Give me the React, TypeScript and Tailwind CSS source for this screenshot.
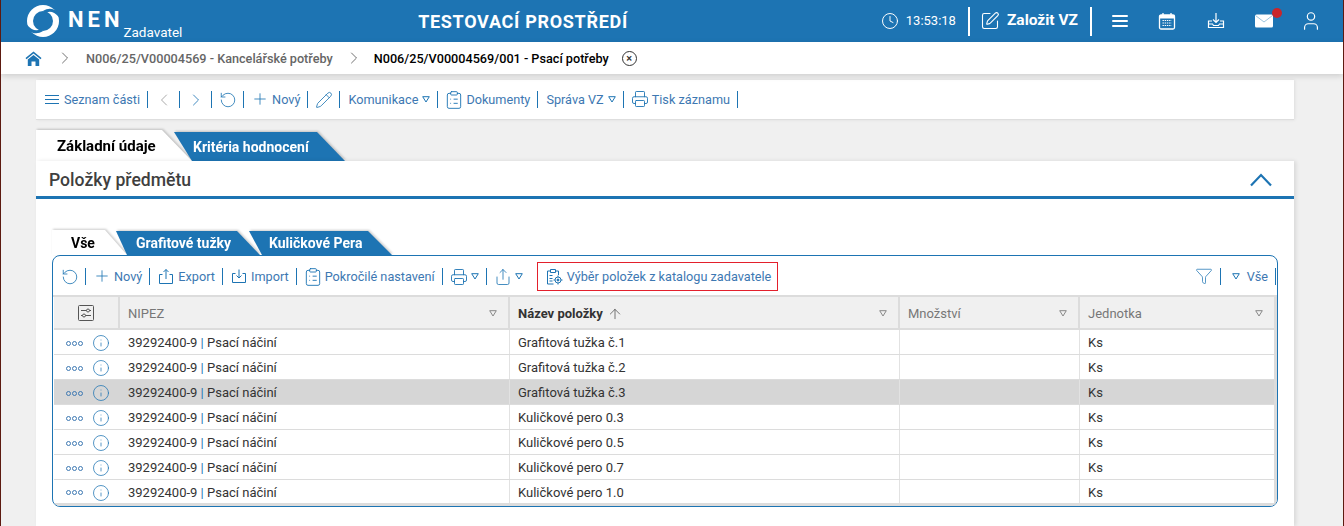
import { Clock, SquarePen, User, ChevronRight, ChevronLeft, RotateCcw, Plus, Pencil, ClipboardList, Printer, Share, Funnel, Info, ArrowUp } from "lucide-react";
import type { ReactNode } from "react";

const rows = [
  "Grafitová tužka č.1",
  "Grafitová tužka č.2",
  "Grafitová tužka č.3",
  "Kuličkové pero 0.3",
  "Kuličkové pero 0.5",
  "Kuličkové pero 0.7",
  "Kuličkové pero 1.0",
];

function Sep() {
  return <span className="w-px h-[17px] shrink-0 bg-[#1d74b3]" />;
}

function Tri({ className = "text-[#1d74b3]" }: { className?: string }) {
  return (
    <svg width="8" height="7" viewBox="0 0 8 7" fill="none" stroke="currentColor" className={`shrink-0 ${className}`}>
      <path d="M0.7 0.7h6.6L4 6z" />
    </svg>
  );
}

function Item({ children }: { children: ReactNode }) {
  return <span className="flex items-center gap-[4px] pl-2 pr-[7px] text-[12.7px] text-[#3d78b2] whitespace-nowrap">{children}</span>;
}

function Logo() {
  return (
    <svg width="32" height="32" viewBox="0 0 32 32" className="shrink-0">
      <circle cx="16" cy="16" r="16" fill="#fff" />
      <circle cx="16" cy="16" r="10" fill="#1d74b3" />
      <path d="M17 7Q25 2 33 11" fill="none" stroke="#1d74b3" strokeWidth="3" />
      <path d="M15 25Q7 30 -1 21" fill="none" stroke="#1d74b3" strokeWidth="3" />
    </svg>
  );
}

function BurgerIcon() {
  return (
    <svg width="16" height="14" viewBox="0 0 16 14" fill="#fff" className="shrink-0">
      <rect y="1" width="16" height="2" rx="1" />
      <rect y="6" width="16" height="2" rx="1" />
      <rect y="11" width="16" height="2" rx="1" />
    </svg>
  );
}

function CalendarIcon() {
  return (
    <svg width="18" height="18" viewBox="0 0 18 18" className="shrink-0">
      <rect x="1.5" y="3" width="15" height="14" rx="1.5" fill="none" stroke="#fff" strokeWidth="1.3" />
      <rect x="1.5" y="3" width="15" height="3.5" fill="#fff" />
      <path d="M5 1v3M13 1v3" stroke="#fff" strokeWidth="1.3" />
      <path d="M4.5 8.5h9M4.5 11h9M4.5 13.5h9" stroke="#fff" strokeWidth="1.2" strokeDasharray="1.4 0.8" />
    </svg>
  );
}

function TrayIcon() {
  return (
    <svg width="18" height="18" viewBox="0 0 18 18" fill="none" stroke="#fff" strokeWidth="1.2" className="shrink-0">
      <path d="M9 1v9M6 7.5 9 10.5l3-3" />
      <path d="M5 9H1.5v6.5h15V9H13M1.5 12h4l1 1.5h5l1-1.5h4" />
    </svg>
  );
}

function MailIcon() {
  return (
    <svg width="18" height="14" viewBox="0 0 18 14" className="shrink-0">
      <rect width="18" height="13" y="0.5" rx="1.5" fill="#fff" />
      <path d="M0.5 1.5 9 8l8.5-6.5" fill="none" stroke="#9cc3de" />
    </svg>
  );
}

function ImportIcon() {
  return (
    <svg width="16" height="16" viewBox="0 0 16 16" fill="none" stroke="#1d74b3" className="shrink-0">
      <path d="M4.5 5.5H1.5v9h13v-9h-3M8 1.5v8M5.5 7.5 8 10l2.5-2.5" />
    </svg>
  );
}

function ExportIcon() {
  return (
    <svg width="16" height="17" viewBox="0 0 16 17" fill="none" stroke="#1d74b3" className="shrink-0">
      <path d="M4.5 6.5H1.5v9h13v-9h-3M8 11V1.5M5.5 4 8 1.5 10.5 4" />
    </svg>
  );
}

function CatalogIcon() {
  return (
    <svg width="17" height="17" viewBox="0 0 17 17" fill="none" stroke="#1d74b3" className="shrink-0">
      <path d="M4.5 3H1.5v13h6M9.5 3h3v4" />
      <path d="M4.5 1.5h5V4.5h-5zM3.5 7.5h3M3.5 10.5h3M3.5 13h3" />
      <circle cx="12" cy="12" r="3" />
      <circle cx="12" cy="12" r="1" fill="#1d74b3" />
      <path d="M12 7.5V9M12 15v1.5M7.5 12H9M15 12h1.5" />
    </svg>
  );
}

function SettingsBox() {
  return (
    <svg width="16" height="16" viewBox="0 0 16 16" fill="none" stroke="#555" className="shrink-0">
      <rect x="0.5" y="0.5" width="15" height="15" rx="1" />
      <path d="M3 5.5h10M3 10.5h10" />
      <circle cx="10" cy="5.5" r="1.5" fill="#f0f0f0" />
      <circle cx="6" cy="10.5" r="1.5" fill="#f0f0f0" />
    </svg>
  );
}

function HeadCell({ label, width, bold, sort }: { label: string; width: string; bold?: boolean; sort?: boolean }) {
  return (
    <div className={`${width} flex items-center border-r-2 border-[#dcdcdc] pl-2 pr-[11px] pt-[2px] last:border-r-0`}>
      <span className={bold ? "font-bold text-[#333]" : "text-[#777]"}>{label}</span>
      {sort && <ArrowUp size={16} strokeWidth={1.2} className="ml-[4px] text-[#555]" />}
      <Tri className="ml-auto text-[#888]" />
    </div>
  );
}

export default function App() {
  return (
    <div className="h-[526px] w-[1344px] overflow-hidden bg-[#f0f0f0] border-x border-[#5c1a10] font-['Roboto',sans-serif] flex flex-col">
      {/* Top bar */}
      <header className="h-[42px] shrink-0 bg-[#1d74b3] text-white flex items-center">
        <div className="w-[380px] flex items-center pl-[26px]">
          <Logo />
          <span className="ml-[9px] text-[22px] leading-none font-bold tracking-[4px] mb-[3px]">NEN</span>
          <span className="text-[13.5px] leading-none mt-[24px]">Zadavatel</span>
        </div>
        <div className="w-[284px] text-center text-[18px] font-bold tracking-[0.7px]">TESTOVACÍ PROSTŘEDÍ</div>
        <div className="ml-auto flex items-center h-full pr-[21px]">
          <Clock size={18} strokeWidth={1.3} />
          <span className="ml-[7px] text-[13px]">13:53:18</span>
          <span className="w-[2px] h-[29px] bg-white ml-[12px]" />
          <SquarePen size={20} strokeWidth={1.3} className="ml-[10px]" />
          <span className="ml-[7px] text-[15.5px] font-bold">Založit VZ</span>
          <span className="w-[2px] h-[29px] bg-white ml-[12px]" />
          <span className="ml-[20px]"><BurgerIcon /></span>
          <span className="ml-[30px]"><CalendarIcon /></span>
          <span className="ml-[31px]"><TrayIcon /></span>
          <span className="relative ml-[30px]">
            <MailIcon />
            <span className="absolute -top-[6px] left-[17px] w-[10px] h-[10px] rounded-full bg-[#c9262b]" />
          </span>
          <User size={22} strokeWidth={1.3} className="ml-[27px]" />
        </div>
      </header>

      {/* Breadcrumb */}
      <nav className="h-[32px] shrink-0 bg-white shadow-[0_2px_6px_rgba(0,0,0,0.15)] flex items-center text-[12.67px] font-medium relative">
        <svg width="17" height="17" viewBox="0 0 17 17" className="ml-[24px]" fill="#1d74b3">
          <path d="M8.5 1.5 0.5 8l1 1.2 7-5.6 7 5.6 1-1.2z" />
          <path d="M2.8 9.6 8.5 5l5.7 4.6V16h-3.7v-4.5h-4V16H2.8z" />
        </svg>
        <ChevronRight size={20} strokeWidth={1} className="ml-[13px] text-[#555]" />
        <span className="ml-[11px] text-[#666]">N006/25/V00004569 - Kancelářské potřeby</span>
        <ChevronRight size={20} strokeWidth={1} className="ml-[11px] text-[#555]" />
        <span className="ml-[10px] text-black">N006/25/V00004569/001 - Psací potřeby</span>
        <span className="ml-[13px] w-[15px] h-[15px] rounded-full border border-[#333] flex items-center justify-center text-[11px] leading-none text-[#333]">×</span>
      </nav>

      <main className="flex-1 min-h-0 pl-[35px] pr-[49px] pt-[6px] flex flex-col">
        {/* Main toolbar */}
        <div className="h-[40px] shrink-0 bg-white border-b border-[#dedede] shadow-[1px_0_3px_rgba(0,0,0,0.08)] flex items-center pl-[1px]">
          <Item>
            <span className="flex flex-col gap-[3px] w-[15px]">
              <span className="h-px w-[14px] bg-[#1d74b3]" />
              <span className="h-px w-[14px] bg-[#1d74b3]" />
              <span className="h-px w-[14px] bg-[#1d74b3]" />
            </span>
            Seznam části
          </Item>
          <Sep />
          <Item><ChevronLeft size={20} strokeWidth={1} className="-mx-[2px] text-[#999]" /></Item>
          <Sep />
          <Item><ChevronRight size={20} strokeWidth={1} className="-mx-[2px] text-[#1d74b3]" /></Item>
          <Sep />
          <Item><RotateCcw size={18} strokeWidth={1.1} className="-mx-[1px] text-[#1d74b3]" /></Item>
          <Sep />
          <Item><Plus size={18} strokeWidth={1.1} className="-mx-[1px] text-[#1d74b3]" />Nový</Item>
          <Sep />
          <Item><Pencil size={18} strokeWidth={1.1} className="-mx-[1px] text-[#1d74b3]" /></Item>
          <Sep />
          <Item>Komunikace<Tri /></Item>
          <Sep />
          <Item><ClipboardList size={20} strokeWidth={1.1} className="-mx-[2px] text-[#1d74b3]" />Dokumenty</Item>
          <Sep />
          <Item>Správa VZ<Tri /></Item>
          <Sep />
          <Item><Printer size={18} strokeWidth={1.2} className="-mx-[1px] text-[#1d74b3]" />Tisk záznamu</Item>
          <Sep />
        </div>

        {/* Outer tabs */}
        <div className="h-[31px] mt-[10px] shrink-0 flex items-end [filter:drop-shadow(1px_-1px_1px_rgba(0,0,0,0.2))]">
          <div className="h-[31px] w-[156px] -mr-[18px] bg-white [clip-path:polygon(0_0,126px_0,100%_100%,0_100%)] text-[15px] font-bold text-black pl-[21px] pt-[5px]">Základní údaje</div>
          <div className="h-[29px] w-[171px] bg-[#1d74b3] [clip-path:polygon(0_0,143px_0,100%_100%,18px_100%)] text-[14px] font-bold text-white pl-[19px] pt-[5px]">Kritéria hodnocení</div>
        </div>

        {/* Panel */}
        <section className="flex-1 min-h-0 bg-white shadow-[2px_0_4px_rgba(0,0,0,0.1)] relative">
          <div className="h-[38px] border-b-[3px] border-[#1d74b3] flex items-center justify-between pl-[13px] pr-[22px]">
            <h2 className="mt-[3px] text-[17.6px] font-medium text-[#3f3f3f]">Položky předmětu</h2>
            <svg width="22" height="14" viewBox="0 0 22 14" fill="none" stroke="#1d74b3" strokeWidth="2.2" className="mt-[3px]">
              <path d="M1 12.5 11 2l10 10.5" />
            </svg>
          </div>

          <div className="px-[16px] pt-[31px]">
            {/* Inner tabs */}
            <div className="h-[25px] flex items-end [filter:drop-shadow(1px_-1px_1px_rgba(0,0,0,0.2))]">
              <div className="h-[25px] w-[75px] -mr-[11px] bg-white [clip-path:polygon(0_0,53px_0,100%_100%,0_100%)] text-[14px] font-bold text-black pl-[19px] pt-[3px]">Vše</div>
              <div className="h-[24px] w-[144px] -mr-[11px] bg-[#1d74b3] [clip-path:polygon(0_0,121px_0,100%_100%,11px_100%)] text-[14px] font-bold text-white pl-[20px] pt-[2px]">Grafitové tužky</div>
              <div className="h-[24px] w-[143px] bg-[#1d74b3] [clip-path:polygon(0_0,119px_0,100%_100%,13px_100%)] text-[14px] font-bold text-white pl-[20px] pt-[2px]">Kuličkové Pera</div>
            </div>

            {/* Grid box */}
            <div className="h-[252px] border border-[#1d74b3] rounded-[8px] overflow-hidden bg-white">
              <div className="h-[41px] pt-[2px] flex items-center pl-[1px] pr-[1px] border-b-2 border-[#dcdcdc]">
                <Item><RotateCcw size={18} strokeWidth={1.1} className="-mx-[1px] text-[#1d74b3]" /></Item>
                <Sep />
                <Item><Plus size={18} strokeWidth={1.1} className="-mx-[1px] text-[#1d74b3]" />Nový</Item>
                <Sep />
                <Item><ExportIcon />Export</Item>
                <Sep />
                <Item><ImportIcon />Import</Item>
                <Sep />
                <Item><ClipboardList size={20} strokeWidth={1.1} className="-mx-[2px] text-[#1d74b3]" />Pokročilé nastavení</Item>
                <Sep />
                <Item><Printer size={18} strokeWidth={1.2} className="-mx-[1px] text-[#1d74b3]" /><Tri /></Item>
                <Sep />
                <Item><Share size={18} strokeWidth={1.1} className="-mx-[1px] text-[#1d74b3]" /><Tri /></Item>
                <div className="ml-[7px] h-[29px] w-[241px] border border-[#e3202c] flex items-center">
                  <Item><CatalogIcon />Výběr položek z katalogu zadavatele</Item>
                </div>
                <div className="ml-auto flex items-center">
                  <Item><Funnel size={18} strokeWidth={1} className="text-[#1d74b3]" /></Item>
                  <Sep />
                  <Item><Tri className="ml-[3px] text-[#1d74b3]" /><span className="ml-[3px]">Vše</span></Item>
                  <Sep />
                </div>
              </div>

              <div className="border-r-[3px] border-b-[3px] border-[#dcdcdc] ml-[1px] text-[13px]">
                <div className="h-[33px] flex bg-[#f0f0f0] border-b-2 border-[#dcdcdc]">
                  <div className="w-[66px] flex items-center justify-center border-r-2 border-[#dcdcdc]">
                    <SettingsBox />
                  </div>
                  <HeadCell label="NIPEZ" width="w-[390px]" />
                  <HeadCell label="Název položky" width="w-[390px]" bold sort />
                  <HeadCell label="Množství" width="w-[180px]" />
                  <HeadCell label="Jednotka" width="flex-1" />
                </div>
                {rows.map((name, i) => (
                  <div
                    key={name}
                    className={`h-[25px] last:h-[23px] flex border-b border-[#dcdcdc] last:border-b-0 text-[#333] ${i === 2 ? "bg-[#d6d6d6]" : ""}`}
                  >
                    <div className="w-[66px] flex items-center pl-[12px] pt-[2px] gap-[9px]">
                      <span className="flex gap-[1px]">
                        <span className="w-[5px] h-[5px] rounded-full border border-[#3d78b2]" />
                        <span className="w-[5px] h-[5px] rounded-full border border-[#3d78b2]" />
                        <span className="w-[5px] h-[5px] rounded-full border border-[#3d78b2]" />
                      </span>
                      <Info size={18} strokeWidth={1} className="text-[#1d74b3]" />
                    </div>
                    <div className="w-[390px] pl-2 pt-[2px] flex items-center whitespace-pre">39292400-9 <span className="text-[#1d74b3]">|</span> Psací náčiní</div>
                    <div className="w-[390px] pl-[8px] pt-[2px] -ml-px flex items-center border-l border-[#e2e2e2]">{name}</div>
                    <div className="w-[180px] border-l border-[#e2e2e2]" />
                    <div className="flex-1 pl-2 pt-[2px] flex items-center border-l border-[#e2e2e2]">Ks</div>
                  </div>
                ))}
              </div>
            </div>
          </div>
        </section>
      </main>
    </div>
  );
}
